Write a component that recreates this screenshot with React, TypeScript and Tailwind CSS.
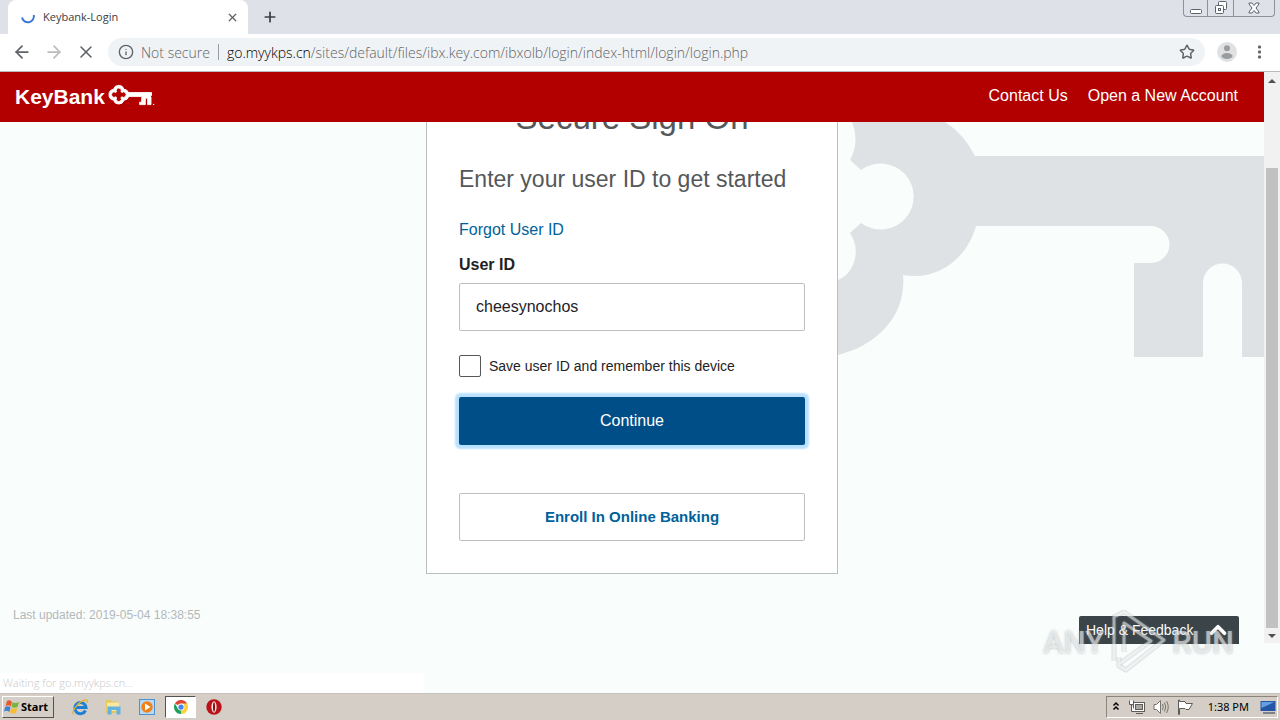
import { ArrowLeft, ArrowRight, ChevronUp, Info, Plus, Star, X } from "lucide-react";

function KeyLogo() {
  return (
    <svg className="h-[24px] w-[47px]" viewBox="0 0 47 24" fill="none" aria-hidden="true">
      <path
        fillRule="evenodd"
        fill="#fff"
        stroke="#fff"
        strokeWidth="0.9"
        d="M5.5 5.2A5.5 5.5 0 0 1 16 5.2A5.5 5.5 0 0 1 20.6 8.6H43.5V11.6H42L43 13.5V20.6H39.6V14.8Q38.5 13.6 37.3 14.8V20.6H31.6V18.2H33.7V13.5L34.7 12.4H20.9A5.5 5.5 0 0 1 16 16.2A5.5 5.5 0 0 1 5.5 16.2A5.6 5.6 0 0 1 5.5 5.2ZM10.8 4A2.6 2.6 0 0 0 8.6 7.7L7.8 8.5A2.7 2.7 0 1 0 7.8 12.8L8.6 13.6A2.6 2.6 0 1 0 13 13.6L13.8 12.8A2.7 2.7 0 1 0 13.8 8.5L13 7.7A2.6 2.6 0 0 0 10.8 4Z"
      />
      <circle cx="45.6" cy="20.4" r="0.7" fill="#fff" />
    </svg>
  );
}

function KeyBackdrop() {
  return (
    <svg
      className="absolute top-0 left-1/2 ml-[206px] h-[235px] w-[426px]"
      viewBox="838 122 426 235"
      fill="#dfe2e4"
      aria-hidden="true"
    >
      <path d="M852 122Q860 141 850 160L861 170A33 33 0 1 1 861 223L850 233C862 250 854 274 838 280V355C877 346 907 315 903 275C934 281 966 262 976 226H1151A18 18 0 0 1 1151 263H1134V357H1203V283A19.5 19.5 0 0 1 1242 283V357H1264V156H975Q964 134 945 122Z" />
    </svg>
  );
}

function BrowserChrome() {
  const control = "flex items-center justify-center";
  return (
    <div className="font-['Open_Sans','Noto_Sans',sans-serif]">
      <div className="flex h-[34px] items-start bg-[#dee1e8]">
        <div className="ml-2 flex h-[34px] w-60 items-center rounded-t-lg bg-white pr-2 pl-3">
          <svg className="size-4" viewBox="0 0 16 16" fill="none" aria-hidden="true">
            <path d="M2 8.5A6 6 0 1 0 13.8 6" stroke="#3b76d8" strokeWidth="2" />
          </svg>
          <span className="ml-[7px] flex-1 text-[11px] text-[#3c4043]">Keybank-Login</span>
          <button type="button" aria-label="Close tab" className="flex size-4 items-center justify-center text-[#5f6368]">
            <X size={13} strokeWidth={2.4} />
          </button>
        </div>
        <button type="button" aria-label="New tab" className="ml-[14px] mt-[9px] text-[#3c4043]">
          <Plus size={16} strokeWidth={2.6} />
        </button>
        <div className="mr-[5px] ml-auto flex h-[17px] rounded-b border border-t-0 border-[#8c919b] text-[#5d626b]">
          <button type="button" aria-label="Minimize" className={`${control} w-6 border-r border-[#8c919b]`}>
            <svg width="14" height="14" viewBox="0 0 14 14" fill="#fff" stroke="currentColor">
              <rect x="1.5" y="8.5" width="11" height="4" rx="1" />
            </svg>
          </button>
          <button type="button" aria-label="Restore" className={`${control} w-[26px] border-r border-[#8c919b]`}>
            <svg width="14" height="14" viewBox="0 0 14 14" fill="#fff" stroke="currentColor">
              <rect x="4.5" y="0.5" width="8" height="8" rx="1" />
              <rect x="1.5" y="4.5" width="8" height="8" rx="1" />
              <rect x="4.5" y="7.5" width="2" height="2" />
            </svg>
          </button>
          <button type="button" aria-label="Close" className={`${control} w-10`}>
            <svg width="12" height="12" viewBox="0 0 12 12" fill="#fff" stroke="currentColor">
              <path d="M1 1H4L6 3.5 8 1H11V2L8 6 11 10V11H8L6 8.5 4 11H1V10L4 6 1 2Z" />
            </svg>
          </button>
        </div>
      </div>
      <div className="flex h-[38px] items-center border-b border-[#b9bbbe] bg-white px-3 pb-px text-[#5f6368]">
        <button type="button" aria-label="Back">
          <ArrowLeft size={20} strokeWidth={2.1} />
        </button>
        <button type="button" aria-label="Forward" className="ml-3 text-[#babcbe]">
          <ArrowRight size={20} strokeWidth={2.1} />
        </button>
        <button type="button" aria-label="Stop loading" className="ml-3">
          <X size={20} strokeWidth={1.9} />
        </button>
        <div className="ml-3 flex h-7 flex-1 items-center rounded-full bg-[#f0f3f5] px-[10px] text-[14px] font-light">
          <Info size={16} />
          <span className="ml-[7px]">Not secure</span>
          <span className="mx-2 h-4 w-px bg-[#9a9da1]" />
          <span className="flex-1 text-[#5f6368]">
            <span className="text-black">go.myykps.cn</span>
            /sites/default/files/ibx.key.com/ibxolb/login/index-html/login/login.php
          </span>
          <button type="button" aria-label="Bookmark this tab">
            <Star size={16} strokeWidth={2.2} />
          </button>
        </div>
        <button type="button" aria-label="Profile" className="ml-[12px]">
          <svg className="size-5" viewBox="0 0 20 20" aria-hidden="true">
            <circle cx="10" cy="10" r="10" fill="#dfe1e3" />
            <circle cx="10" cy="6.3" r="3" fill="#9a9da0" />
            <ellipse cx="10" cy="14" rx="5.6" ry="3" fill="#9a9da0" />
          </svg>
        </button>
        <button type="button" aria-label="Menu" className="mr-px ml-[14px]">
          <svg className="h-4 w-4" viewBox="0 0 16 16" fill="currentColor" aria-hidden="true">
            <rect x="7" y="1.500" width="3" height="3" rx="1" />
            <rect x="7" y="6.500" width="3" height="3" rx="1" />
            <rect x="7" y="11.500" width="3" height="3" rx="1" />
          </svg>
        </button>
      </div>
    </div>
  );
}

function SignOnCard() {
  return (
    <form
      className="relative mx-auto flex w-[412px] flex-col border border-t-0 border-[#b9bfc2] bg-white px-8 pb-8 text-[#1e2224]"
      onSubmit={(event) => event.preventDefault()}
    >
      <h1 className="-mt-6 text-center text-[33px] leading-10 text-[#54585a]">Secure Sign On</h1>
      <h2 className="mt-[25px] text-[23px] leading-8 whitespace-nowrap text-[#54585a]">Enter your user ID to get started</h2>
      <a href="#forgot" className="mt-[23px] self-start text-[16px] leading-6 text-[#00629b]">
        Forgot User ID
      </a>
      <label htmlFor="user-id" className="mt-[11px] text-[16px] leading-6 font-bold">
        User ID
      </label>
      <input
        id="user-id"
        type="text"
        defaultValue="cheesynochos"
        className="mt-[6px] h-12 rounded-xs border border-[#b9bfc2] px-4 text-[16px] outline-none"
      />
      <div className="mt-6 flex items-center gap-2">
        <input
          id="remember"
          type="checkbox"
          className="size-[22px] appearance-none rounded-xs border border-[#54585a] bg-white"
        />
        <label htmlFor="remember" className="text-[14px] leading-5">
          Save user ID and remember this device
        </label>
      </div>
      <button
        type="submit"
        className="mt-5 h-12 rounded-xs bg-[#004e87] text-[16px] text-white shadow-[0_0_2px_4px_#b9e1ff]"
      >
        Continue
      </button>
      <button
        type="button"
        className="mt-12 h-12 rounded-xs border border-[#b9bfc2] text-[15px] font-bold text-[#00629b]"
      >
        Enroll In Online Banking
      </button>
    </form>
  );
}

function Scrollbar() {
  return (
    <div className="mb-[50px] flex w-4 flex-col items-center bg-[#f1f1f1]" aria-hidden="true">
      <svg className="h-[17px] w-4" viewBox="0 0 16 17" fill="#505050">
        <path d="M4 11 8 7 12 11Z" />
      </svg>
      <div className="mt-[79px] w-3 flex-1 bg-[#c1c1c1]" />
      <svg className="h-[15px] w-4" viewBox="0 0 16 15" fill="#505050">
        <path d="M4 6 8 10 12 6Z" />
      </svg>
    </div>
  );
}

function Watermark() {
  return (
    <div className="pointer-events-none absolute right-[46px] bottom-[16px] flex h-[68px] items-center font-['Roboto',sans-serif] text-[31px] leading-9 font-medium text-white/55 [text-shadow:0_0_3px_rgb(120_128_132/0.55)]">
      <span>ANY</span>
      <svg className="mx-1 h-[66px] w-[60px]" viewBox="1106 609 60 66" fill="none" strokeLinejoin="round" aria-hidden="true">
        <g stroke="#8d9395" strokeOpacity="0.25" strokeWidth="5">
          <path d="M1112 660V616L1122 611 1162 639 1124 669 1117 665V656" />
          <path d="M1122 651V622L1149 640 1117 663" />
        </g>
        <g stroke="#fff" strokeOpacity="0.5" strokeWidth="3">
          <path d="M1112 660V616L1122 611 1162 639 1124 669 1117 665V656" />
          <path d="M1122 651V622L1149 640 1117 663" />
        </g>
      </svg>
      <span>RUN</span>
    </div>
  );
}

function BankPage() {
  return (
    <div className="relative flex flex-1 overflow-hidden bg-[#f9fdfc] font-['Liberation_Sans',Arial,sans-serif]">
      <div className="flex flex-1 flex-col">
        <header className="relative z-10 flex h-[50px] items-center bg-[#b20000] px-[15px] pb-[2px] text-white">
          <a href="#home" className="flex items-center gap-[3px]" aria-label="KeyBank home">
            <span className="pt-[2px] text-[21px] leading-6 font-bold">KeyBank</span>
            <KeyLogo />
          </a>
          <nav className="mr-[11px] ml-auto flex gap-5 text-[16px] leading-6">
            <a href="#contact">Contact Us</a>
            <a href="#open">Open a New Account</a>
          </nav>
        </header>
        <main className="relative flex-1">
          <KeyBackdrop />
          <SignOnCard />
          <p className="mt-[31px] pl-[13px] text-[12px] leading-5 text-[#b4b8ba]">Last updated: 2019-05-04 18:38:55</p>
        </main>
      </div>
      <Scrollbar />
      <button
        type="button"
        className="absolute right-[41px] bottom-[49px] flex h-7 w-40 items-center justify-between rounded-t-xs bg-[#3a4449] pr-2 pl-[7px] text-[14px] text-white"
      >
        Help &amp; Feedback
        <ChevronUp size={26} strokeWidth={3.5} />
      </button>
      <Watermark />
      <div className="absolute bottom-0 left-0 flex h-5 w-[424px] items-center bg-white pl-[3px] font-['Open_Sans','Noto_Sans',sans-serif] text-[11px] font-light text-[#c6c8ca]">
        Waiting for go.myykps.cn...
      </div>
    </div>
  );
}

function Taskbar() {
  return (
    <footer className="flex h-[27px] items-center border-t border-[#c6c1b9] bg-[#d4cec6] pl-[2px] font-['Noto_Sans',sans-serif] text-black">
      <button
        type="button"
        className="flex h-[22px] w-[52px] items-center gap-px border border-t-white border-r-[#55524e] border-b-[#55524e] border-l-white pl-px text-[11px] font-bold"
      >
        <svg className="size-4 shrink-0" viewBox="0 0 16 16" aria-hidden="true">
          <path d="M3 2Q6 0 8 3L6.8 7.4Q4.500 5.500 1.500 7Z" fill="#e8592a" />
          <path d="M8.800 3.300Q11 5 15 3L13.500 8Q10 9.500 7.600 7.700Z" fill="#79b53c" />
          <path d="M1.200 8Q4 6.500 6.500 8.400L5.300 13Q3 11 0 12.500Z" fill="#3e83cf" />
          <path d="M7.300 8.700Q10 10.500 13.200 9L12 13.700Q9 15.500 6 13.400Z" fill="#f6bd2d" />
        </svg>
        <span>Start</span>
      </button>
      <div className="ml-[10px] flex items-center gap-px">
        <button type="button" aria-label="Internet Explorer" className="flex h-[22px] w-8 items-center justify-center">
          <svg className="size-[17px]" viewBox="0 0 17 17" fill="none">
            <path d="M13.500 11.500A5.600 5.600 0 1 1 14 8.500H4" stroke="#1f7fd2" strokeWidth="3" />
            <path d="M1.500 15.500C-1 12 7 2 13.500 1Q16.500 0.600 15 4" stroke="#e4b52c" strokeWidth="1.300" />
          </svg>
        </button>
        <button type="button" aria-label="Windows Explorer" className="flex h-[22px] w-8 items-center justify-center">
          <svg className="size-4" viewBox="0 0 16 16">
            <path d="M1 1H6L7 2.500H13V14H1Z" fill="#e3c65c" />
            <path d="M2 3.500H14V12H2Z" fill="#f7e9a0" />
            <path d="M2.500 7.500H15.500V15.500H11.500V11H6.500V15.500H2.500Z" fill="#63b2df" />
          </svg>
        </button>
        <button type="button" aria-label="Media Player" className="flex h-[22px] w-[34px] items-center justify-center">
          <svg className="size-4" viewBox="0 0 16 16">
            <rect x="0.500" y="0.500" width="15" height="15" fill="#b6d9f4" stroke="#4b92cf" />
            <circle cx="8" cy="8" r="5.700" fill="#f28018" />
            <path d="M6 4.500 11.500 8 6 11.500Z" fill="#fff" />
          </svg>
        </button>
        <button
          type="button"
          aria-label="Chrome"
          className="flex h-[22px] w-[31px] items-center justify-center border border-t-[#55524e] border-r-white border-b-white border-l-[#55524e] bg-white"
        >
          <svg className="size-[14px]" viewBox="0 0 16 16">
            <path d="M8 8 1.070 4A8 8 0 0 1 14.930 4Z" fill="#dc4437" />
            <path d="M8 8V4H14.930A8 8 0 0 1 8 16Z" fill="#fdd03f" />
            <path d="M8 8 8 16A8 8 0 0 1 1.070 4L4.600 10Z" fill="#22a05a" />
            <path d="M8 8 11.500 10 8 16Z" fill="#fdd03f" />
            <circle cx="8" cy="8" r="3.900" fill="#fff" />
            <circle cx="8" cy="8" r="3" fill="#4585ed" />
          </svg>
        </button>
        <button type="button" aria-label="Opera" className="flex h-[22px] w-[34px] items-center justify-center">
          <svg className="size-4" viewBox="0 0 16 16">
            <circle cx="8" cy="8" r="7.700" fill="#b91319" />
            <ellipse cx="8" cy="8" rx="2.600" ry="5.800" fill="#f6e4e1" />
            <ellipse cx="8" cy="8" rx="1" ry="4.800" fill="#8b0a10" />
          </svg>
        </button>
      </div>
      <div className="mr-[2px] ml-auto flex h-[22px] w-[172px] items-center border border-t-[#8a857d] border-r-white border-b-white border-l-[#8a857d] pl-[5px]">
        <svg className="h-3 w-2" viewBox="0 0 8 12" fill="none" stroke="#000" strokeWidth="1.500" aria-hidden="true">
          <path d="M1.500 4.500 4 2 6.500 4.500M1.500 8.500 4 6 6.500 8.500" />
        </svg>
        <svg className="ml-[9px] size-4" viewBox="0 0 16 16" fill="#fff" stroke="#5e5c58" aria-hidden="true">
          <rect x="4.500" y="3.500" width="11" height="9" />
          <rect x="6.500" y="5.500" width="7" height="5" fill="#aaa7a2" />
          <path d="M7 14.500H14M0.500 1.500V5.500H4.500V1.500M2.500 5.500V12.500H6" />
        </svg>
        <svg className="ml-2 size-4" viewBox="0 0 16 16" fill="none" stroke="#77746f" aria-hidden="true">
          <path d="M1 5.500H3.500L7.500 1.500V14.500L3.500 10.500H1Z" fill="#fff" />
          <path d="M9.500 5Q11 8 9.500 11M11.500 3.500Q14 8 11.500 12.500M13.500 2Q17 8 13.500 14" />
        </svg>
        <svg className="ml-2 size-4" viewBox="0 0 16 16" fill="#fff" stroke="#5e5c58" aria-hidden="true">
          <path d="M1.500 1V15.500H2.500V9.500H8L9 10.500H12L15.500 4.500H9L8 2.500H2.500V1Z" />
        </svg>
        <span className="ml-auto text-[11px] whitespace-nowrap">1:38 PM</span>
        <svg className="mr-px ml-[11px] h-4 w-[16px]" viewBox="0 0 16 16" aria-hidden="true">
          <path d="M0.500 2H15.500V12H0.500Z" fill="#2456a8" />
          <path d="M1.500 3H14.500L1.500 9Z" fill="#669fe0" />
          <path d="M3 14H15" stroke="#26344f" />
        </svg>
      </div>
    </footer>
  );
}

export default function App() {
  return (
    <div className="flex min-h-screen flex-col">
      <BrowserChrome />
      <BankPage />
      <Taskbar />
    </div>
  );
}
